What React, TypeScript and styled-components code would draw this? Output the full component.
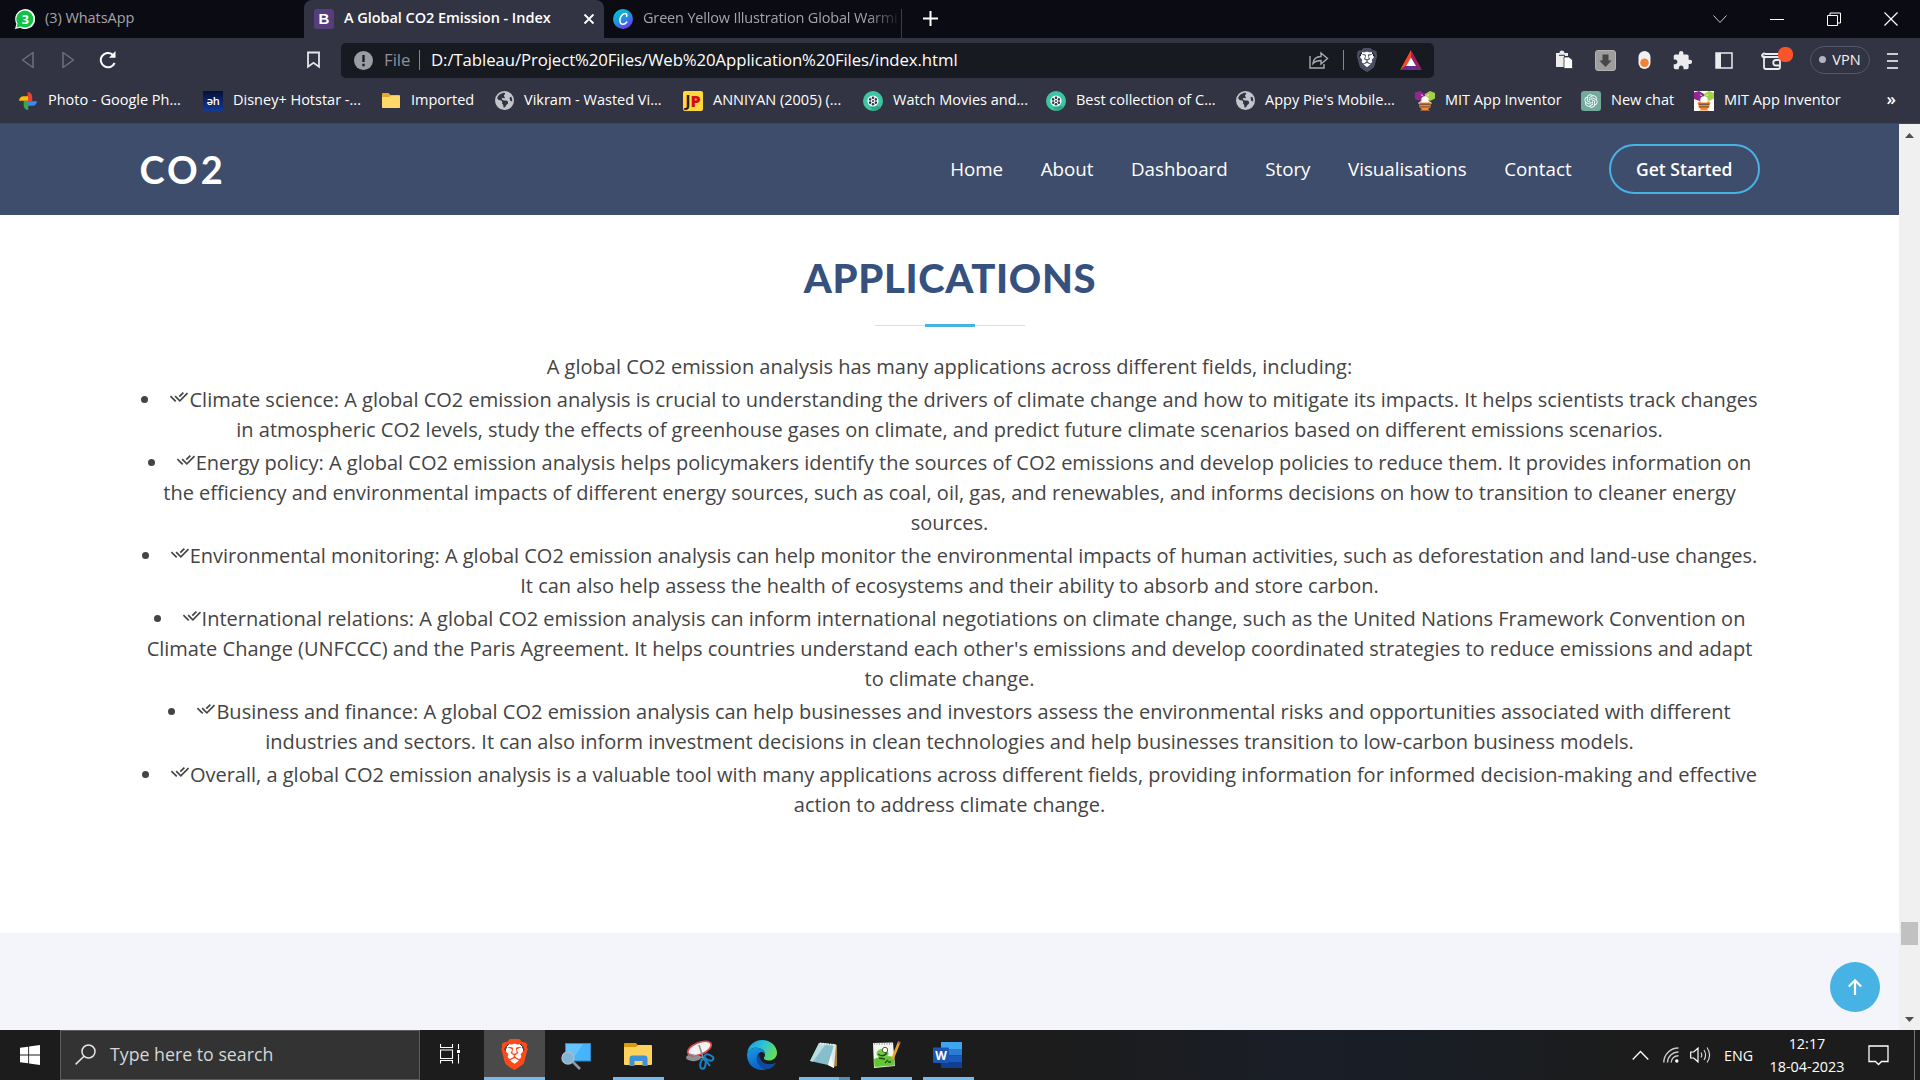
import React from "react";
import styled, { createGlobalStyle } from "styled-components";
import { RiCheckDoubleLine, RiOpenaiFill } from "react-icons/ri";
import { FaBrave, FaEarthAmericas } from "react-icons/fa6";
import { MdExtension } from "react-icons/md";

const Global = createGlobalStyle`
  * { box-sizing: border-box; }
  body { margin: 0; overflow: hidden; background: #fff; }
  svg { display: block; flex: none; }
`;

const Screen = styled.div`
  width: 1920px;
  height: 1080px;
  display: flex;
  flex-direction: column;
  overflow: hidden;
  font-family: "Open Sans", "Noto Sans", sans-serif;
`;

/* ---------- browser chrome ---------- */

const TabStrip = styled.div`
  height: 38px;
  display: flex;
  align-items: stretch;
  background: #0b0b14;
  flex: none;
`;

const Tab = styled.div<{ $width: number; $active?: boolean }>`
  width: ${(p) => p.$width}px;
  display: flex;
  align-items: center;
  gap: 10px;
  padding: 0 9px 0 10px;
  overflow: hidden;
  font-size: 14.5px;
  font-weight: ${(p) => (p.$active ? 600 : 400)};
  letter-spacing: -0.05px;
  color: ${(p) => (p.$active ? "#fff" : "#a3a4a9")};
  background: ${(p) => (p.$active ? "#323443" : "transparent")};
  border-radius: ${(p) => (p.$active ? "8px 8px 0 0" : "0")};
`;

const FirstTab = styled(Tab)`
  padding-left: 15px;
`;

const LastTab = styled(Tab)`
  padding: 0 0 0 9px;
  letter-spacing: -0.17px;
`;

const TabTitle = styled.span<{ $fade?: boolean }>`
  flex: 1;
  white-space: nowrap;
  line-height: 24px;
  padding-bottom: 2px;
  ${(p) => p.$fade && "mask-image: linear-gradient(90deg, #000 225px, transparent 258px);"}
`;

const TabDivider = styled.div`
  width: 1px;
  margin-top: 9px;
  background: #3b3c44;
`;

const NewTab = styled.div`
  display: flex;
  align-items: center;
  margin-left: 21px;
  padding-bottom: 1px;
`;

const WindowButtons = styled.div`
  margin-left: auto;
  display: flex;
  align-items: center;
  gap: 43px;
  padding: 0 22px 1px 0;
`;

const BootstrapMark = styled.span`
  width: 20px;
  height: 20px;
  border-radius: 3px;
  background: #563d7c;
  color: #fff;
  font: 700 15px/20px "Liberation Sans", sans-serif;
  text-align: center;
  flex: none;
`;

const Toolbar = styled.div`
  height: 45px;
  display: flex;
  align-items: center;
  background: #323443;
  flex: none;
`;

const NavButtons = styled.div`
  width: 341px;
  height: 45px;
  display: flex;
  align-items: center;
  padding: 0 0 1px 20px;
`;

const BackGap = styled.div`
  margin-left: 26px;
`;
const ReloadGap = styled.div`
  margin-left: 23px;
`;
const BookmarkGap = styled.div`
  margin-left: auto;
  margin-right: 20px;
`;

const AddressBar = styled.div`
  width: 1093px;
  height: 35px;
  display: flex;
  align-items: center;
  padding: 0 11px 1px 13px;
  border-radius: 5px;
  background: #171a21;
  color: #fff;
  font-size: 16.75px;
`;

const FileLabel = styled.span`
  width: 26px;
  margin-left: 11px;
  padding-bottom: 1px;
  color: #8d9098;
`;

const Rule = styled.span<{ $before?: number }>`
  width: 1px;
  height: 20px;
  margin: 0 11px 0 ${(p) => p.$before ?? 9}px;
  background: #85878d;
`;

const Address = styled.span`
  flex: 1;
  padding-bottom: 1px;
  white-space: nowrap;
  letter-spacing: -0.08px;
`;

const AddressActions = styled.div`
  display: flex;
  align-items: center;
`;

const Extensions = styled.div`
  flex: 1;
  display: flex;
  align-items: center;
  justify-content: space-between;
  padding: 0 190px 1px 121px;
`;

const RightTools = styled.div`
  display: flex;
  align-items: center;
  width: 160px;
  margin-left: -163px;
`;

const Wallet = styled.div`
  width: 33px;
  height: 30px;
  padding: 0;
  margin-top: -2px;
`;

const Vpn = styled.div`
  height: 28px;
  width: 60px;
  margin: -1px 0 0 17px;
  border: 1.5px solid #55576a;
  border-radius: 14px;
  display: flex;
  align-items: center;
  justify-content: center;
  gap: 6px;
  color: #f2f2f4;
  font-size: 14.5px;
  line-height: 20px;
  padding-bottom: 1px;
`;

const Dot = styled.span`
  width: 7px;
  height: 7px;
  border-radius: 50%;
  background: #b1b3c4;
`;

const MenuBars = styled.div`
  margin-left: 17px;
`;

const Bookmarks = styled.div`
  height: 41px;
  flex: none;
  display: grid;
  grid-template-columns: 185px 178px 114px 188px 180px 183px 190px 179px 166px 113px 190px 1fr;
  padding: 0 0 5px 18px;
  align-items: center;
  background: #323443;
  color: #fff;
  font-size: 14.5px;
  border-bottom: 1px solid #3b4762;
`;

const Bookmark = styled.div`
  display: flex;
  align-items: center;
  gap: 10px;
  white-space: nowrap;
`;

const BookmarkLabel = styled.span`
  padding-bottom: 2px;
`;

const HotstarMark = styled.span`
  width: 20px;
  height: 20px;
  background: linear-gradient(#060f3a, #143a94);
  color: #fff;
  font: 600 11px/20px "Open Sans", sans-serif;
  text-align: center;
  letter-spacing: -0.5px;
`;

const JpMark = styled.span`
  width: 20px;
  height: 20px;
  border-radius: 2px;
  background: #ffd83a;
  color: #22222a;
  font: 700 16px/20px "Open Sans", sans-serif;
  text-align: center;
  b { color: #d40d12; }
`;

const ChatMark = styled.span`
  width: 20px;
  height: 20px;
  border-radius: 3px;
  display: flex;
  align-items: center;
  justify-content: center;
  background: #74aa9c;
  color: #fff;
  font-size: 16px;
`;

const More = styled.span`
  justify-self: end;
  padding: 0 24px 4px 0;
  font-size: 17px;
  font-weight: 600;
  line-height: 20px;
`;

/* ---------- page ---------- */

const Viewport = styled.div`
  height: 906px;
  flex: none;
  display: flex;
`;

const Page = styled.main`
  width: 1899px;
  display: flex;
  flex-direction: column;
  position: relative;
  background: #fff;
`;

const Header = styled.header`
  height: 91px;
  flex: none;
  padding: 0 139.5px 2px;
  display: flex;
  align-items: center;
  justify-content: space-between;
  background: #3e4d6b;
`;

const Logo = styled.h1`
  margin: 0;
  color: #fff;
  font: 700 38px/46px Lato, sans-serif;
  letter-spacing: 3px;
`;

const Nav = styled.nav`
  display: flex;
  align-items: center;
  gap: 37.5px;
  color: #fff;
  font-size: 18.75px;
  font-weight: 500;
`;

const GetStarted = styled.a`
  height: 50px;
  padding: 0 25px;
  border: 2px solid #47b2e4;
  border-radius: 25px;
  font-size: 17.5px;
  font-weight: 600;
  line-height: 46px;
`;

const Section = styled.section`
  flex: 1;
  padding: 38px 139.5px 0;
  text-align: center;
  color: #444;
  font-size: 20px;
  line-height: 30px;
`;

const Title = styled.h2`
  margin: 0;
  padding-left: 1px;
  color: #37517e;
  font: 900 40px/50px Lato, sans-serif;
  letter-spacing: 0.65px;
`;

const Underline = styled.div`
  width: 150px;
  height: 3px;
  margin: 21px auto 24.5px;
  display: flex;
  align-items: center;
  background: linear-gradient(#ddd, #ddd) center / 100% 1px no-repeat;
  &::before {
    content: "";
    width: 50px;
    height: 3px;
    margin: 0 auto;
    background: #47b2e4;
  }
`;

const Intro = styled.p`
  margin: 0;
`;

const List = styled.ul`
  margin: 0;
  padding: 0;
  list-style-position: inside;
`;

const Item = styled.li`
  padding-top: 3px;
  svg {
    display: inline;
    vertical-align: 0;
  }
`;

const NextSection = styled.div`
  height: 97px;
  flex: none;
  background: #f3f5fa;
`;

const BackToTop = styled.button`
  position: absolute;
  right: 19px;
  bottom: 18px;
  width: 50px;
  height: 50px;
  padding: 0;
  border: 0;
  border-radius: 50%;
  display: flex;
  align-items: center;
  justify-content: center;
  background: #47b2e4;
`;

const Scrollbar = styled.div`
  width: 21px;
  display: flex;
  flex-direction: column;
  align-items: center;
  padding: 9px 0 8px;
  background: #f0f0f0;
`;

const Thumb = styled.div`
  width: 17px;
  height: 23px;
  margin-top: 784px;
  margin-bottom: auto;
  background: #c1c1c1;
`;

/* ---------- taskbar ---------- */

const Taskbar = styled.footer`
  height: 50px;
  flex: none;
  display: flex;
  background: linear-gradient(90deg, #1c1c1c 1050px, #1a1e27 1300px, #191e26 1400px, #1c1c1c 1620px);
  color: #fff;
`;

const Start = styled.div`
  width: 60px;
  display: flex;
  align-items: center;
  justify-content: center;
`;

const Search = styled.div`
  width: 360px;
  border: 1px solid #5c5c5c;
  background: #333;
  display: flex;
  align-items: center;
  padding: 0 0 2px 14px;
  gap: 14px;
  color: #d6d6d6;
  font-size: 17.75px;
`;

const TaskView = styled.div`
  width: 64px;
  display: flex;
  align-items: center;
  justify-content: center;
  padding: 0 4px 2px 0;
`;

const Task = styled.div<{ $active?: boolean; $open?: boolean; $multi?: boolean }>`
  width: 62px;
  height: 50px;
  padding: 0 2px 1px 0;
  display: flex;
  align-items: center;
  justify-content: center;
  background: ${(p) =>
    p.$active
      ? "linear-gradient(#76b9ed, #76b9ed) 0 100% / 61px 3px no-repeat, linear-gradient(#4a4a4a, #4a4a4a) 0 0 / 61px 50px no-repeat"
      : p.$multi
        ? "linear-gradient(90deg, #76b9ed 40px, #5a8bb2 40px) 5px 100% / 51px 3px no-repeat"
        : p.$open
          ? "linear-gradient(#76b9ed, #76b9ed) 5px 100% / 51px 3px no-repeat"
          : "none"};
`;

const Tray = styled.div`
  margin-left: auto;
  display: flex;
  align-items: center;
`;

const TrayIcon = styled.div<{ $gap: number }>`
  margin-right: ${(p) => p.$gap}px;
`;

const Lang = styled.span`
  width: 29px;
  font-size: 14.25px;
  white-space: nowrap;
`;

const Clock = styled.div`
  width: 76px;
  margin: 0 23px 1px 16px;
  text-align: center;
  font-size: 14.4px;
  line-height: 23px;
  white-space: nowrap;
`;

const DesktopEdge = styled.div`
  width: 6px;
  height: 50px;
  margin-left: 25px;
  border-left: 1px solid #767676;
`;

const BraveBox = styled.div<{ $size: number; $shield: string }>`
  width: ${(p) => p.$size}px;
  height: ${(p) => p.$size}px;
  color: ${(p) => p.$shield};
  display: flex;
  align-items: center;
  justify-content: center;
  background: radial-gradient(ellipse 29% 40% at 50% 48%, #fff 98%, transparent 100%);
  svg {
    width: 100%;
    height: 100%;
  }
`;

/* ---------- drawings ---------- */

const WhatsApp = () => (
  <svg width="20" height="20" viewBox="0 0 20 20">
    <path d="M0 20l1.400-5.200A10 10 0 1 1 5.200 18.700z" fill="#fff" />
    <path d="M1.500 18.600l1.100-4A8.500 8.500 0 1 1 5.600 17.500z" fill="#12c244" />
    <text x="10.300" y="14.600" fontSize="12.500" fontWeight="700" fill="#fff" textAnchor="middle" fontFamily="Open Sans">3</text>
  </svg>
);

const Canva = () => (
  <svg width="20" height="20" viewBox="0 0 20 20">
    <defs>
      <linearGradient id="canva" x1="0.2" y1="0" x2="0.8" y2="1">
        <stop offset="0" stopColor="#06c3cf" />
        <stop offset="0.5" stopColor="#1f93e0" />
        <stop offset="1" stopColor="#7a2ae8" />
      </linearGradient>
    </defs>
    <circle cx="10" cy="10" r="10" fill="url(#canva)" />
    <path d="M13.600 7.400c.5-1.500.2-2.900-1.500-2.900-2.900 0-5.200 3.600-5.200 6.800 0 2.400 1.200 4 3.100 4 1.500 0 2.800-.8 3.800-2.300" fill="none" stroke="#fff" strokeWidth="1.500" strokeLinecap="round" />
  </svg>
);

const Photos = () => (
  <svg width="20" height="20" viewBox="0 0 20 20">
    <path d="M9.600 1a4.600 4.600 0 0 1 4.600 4.700V10H9.600z" fill="#ea4335" />
    <path d="M19 10.200a4.600 4.600 0 0 1-4.600 4.500H10v-4.500z" fill="#4285f4" />
    <path d="M10.300 19a4.600 4.600 0 0 1-4.600-4.600V10h4.600z" fill="#34a853" />
    <path d="M1 9.800a4.600 4.600 0 0 1 4.600-4.500H10v4.500z" fill="#fbbc04" />
  </svg>
);

const Folder = () => (
  <svg width="20" height="20" viewBox="0 0 20 20">
    <path d="M1 3q0-1 1-1h5.500l2 2H18q1 0 1 1v11q0 1-1 1H2q-1 0-1-1z" fill="#e3a92c" />
    <path d="M1 6h7l2-1.500H18q1 0 1 1V16q0 1-1 1H2q-1 0-1-1z" fill="#ffd869" />
  </svg>
);

const Reel = () => (
  <svg width="20" height="20" viewBox="0 0 20 20">
    <circle cx="10" cy="10" r="10" fill="#3cc7a2" />
    <path d="M13.500 14.500L18 16a10 10 0 0 1-8 4l-3-4z" fill="#2fa888" />
    <circle cx="10" cy="10" r="5.600" fill="#f4f7f6" />
    {[0, 60, 120, 180, 240, 300].map((a) => (
      <circle key={a} cx="10" cy="6.700" r="1.250" fill="#27384a" transform={`rotate(${a} 10 10)`} />
    ))}
    <circle cx="10" cy="10" r="1" fill="#27384a" />
  </svg>
);

const Bee = ({ boxed }: { boxed?: boolean }) => (
  <svg width="20" height="20" viewBox="0 0 20 20">
    {boxed && <path d="M0 0h20v20H0z" fill="#fff" />}
    <path d="M0 1.500L5 0l5 3v4.500L5.500 10 0 8z" fill="#91278f" />
    <path d="M10 3l5-3 5 2v5.500L15 10l-5-2.500z" fill="#a5cf47" />
    <path d="M3 12l3-2h8l3 2-2 2H5z" fill={boxed ? "#f7a15a" : "#f3d9c4"} />
    <circle cx="10" cy="9" r="3.700" fill="#fff" />
    <path d="M7.500 5L6.300 3.500M12.500 5l1.200-1.500" stroke="#fff" />
    <path d="M4.500 11.500h11v5L13 18l2 1.500H5L7 18l-2.500-1.500z" fill="#f58a33" />
    <path d="M4.500 12.500h11v1.500h-11zM5 15.200h10v1.300H5z" fill="#7f5636" />
  </svg>
);

const Edge = () => (
  <svg width="30" height="30" viewBox="0 0 30 30">
    <defs>
      <linearGradient id="edgeTop" x1="0" y1="0.2" x2="1" y2="0.6">
        <stop offset="0" stopColor="#1c9fe0" />
        <stop offset="0.5" stopColor="#2fc3d6" />
        <stop offset="1" stopColor="#69e04d" />
      </linearGradient>
      <linearGradient id="edgeLeft" x1="0" y1="0" x2="0.4" y2="1">
        <stop offset="0" stopColor="#1a9be6" />
        <stop offset="1" stopColor="#0a62c4" />
      </linearGradient>
    </defs>
    <path d="M.2 13C1.200 5.500 7.300 0 15 0c8.500 0 15 6 15 12.800 0 4.700-3.700 7.800-8 7.800-3.500 0-5.200-1.300-5.200-2.300 0-.8 1.200-1.300 1.200-3.600C18 10.500 14 7.800 9.500 7.800 4.500 7.800 1.300 10.500.2 13z" fill="url(#edgeTop)" />
    <path d="M0 15c0-4 4-7.200 9.500-7.200 4.500 0 8.500 2.700 8.500 6.700-1-2.200-3-3-4.700-2.200C9.500 14.200 9 19.500 12 24c1.500 2.500 4 4.500 7 5.400C9 32 0 25 0 15z" fill="url(#edgeLeft)" />
    <path d="M11.800 13.500C8.500 17 9 22.500 13.500 26.500c3.500 3 8 3.500 11.500 1 1.500-1 2.700-2.500 3.600-4 .2-.5-.2-.8-.7-.6-8 3.500-15.500-.8-16.100-9.400z" fill="#114a9c" />
  </svg>
);

const bookmarks: [React.ReactNode, string][] = [
  [<Photos />, "Photo - Google Ph..."],
  [<HotstarMark>əh</HotstarMark>, "Disney+ Hotstar -..."],
  [<Folder />, "Imported"],
  [<FaEarthAmericas size={19} color="#c3c5ca" />, "Vikram - Wasted Vi..."],
  [<JpMark>J<b>P</b></JpMark>, "ANNIYAN (2005) (..."],
  [<Reel />, "Watch Movies and..."],
  [<Reel />, "Best collection of C..."],
  [<FaEarthAmericas size={19} color="#c3c5ca" />, "Appy Pie's Mobile..."],
  [<Bee />, "MIT App Inventor"],
  [<ChatMark><RiOpenaiFill /></ChatMark>, "New chat"],
  [<Bee boxed />, "MIT App Inventor"],
];

const applications = [
  "Climate science: A global CO2 emission analysis is crucial to understanding the drivers of climate change and how to mitigate its impacts. It helps scientists track changes in atmospheric CO2 levels, study the effects of greenhouse gases on climate, and predict future climate scenarios based on different emissions scenarios.",
  "Energy policy: A global CO2 emission analysis helps policymakers identify the sources of CO2 emissions and develop policies to reduce them. It provides information on the efficiency and environmental impacts of different energy sources, such as coal, oil, gas, and renewables, and informs decisions on how to transition to cleaner energy sources.",
  "Environmental monitoring: A global CO2 emission analysis can help monitor the environmental impacts of human activities, such as deforestation and land-use changes. It can also help assess the health of ecosystems and their ability to absorb and store carbon.",
  "International relations: A global CO2 emission analysis can inform international negotiations on climate change, such as the United Nations Framework Convention on Climate Change (UNFCCC) and the Paris Agreement. It helps countries understand each other's emissions and develop coordinated strategies to reduce emissions and adapt to climate change.",
  "Business and finance: A global CO2 emission analysis can help businesses and investors assess the environmental risks and opportunities associated with different industries and sectors. It can also inform investment decisions in clean technologies and help businesses transition to low-carbon business models.",
  "Overall, a global CO2 emission analysis is a valuable tool with many applications across different fields, providing information for informed decision-making and effective action to address climate change.",
];

const Tabs = () => (
  <TabStrip>
    <FirstTab $width={304}>
      <WhatsApp />
      <TabTitle>(3) WhatsApp</TabTitle>
    </FirstTab>
    <Tab $width={300} $active>
      <BootstrapMark>B</BootstrapMark>
      <TabTitle>A Global CO2 Emission - Index</TabTitle>
      <svg width="12" height="12" viewBox="0 0 12 12"><path d="M1.500 1.500l9 9M10.500 1.500l-9 9" stroke="#fff" strokeWidth="1.800" /></svg>
    </Tab>
    <LastTab $width={297}>
      <Canva />
      <TabTitle $fade>Green Yellow Illustration Global Warmi</TabTitle>
    </LastTab>
    <TabDivider />
    <NewTab>
      <svg width="15" height="15" viewBox="0 0 15 15"><path d="M7.500 0v15M0 7.500h15" stroke="#fff" strokeWidth="2" /></svg>
    </NewTab>
    <WindowButtons>
      <svg width="14" height="14" viewBox="0 0 14 14"><path d="M.5 3.500L7 10.500l6.500-7" fill="none" stroke="#c9c9cc" /></svg>
      <svg width="14" height="14" viewBox="0 0 14 14"><path d="M0 7.500h14" stroke="#fff" /></svg>
      <svg width="14" height="14" viewBox="0 0 14 14"><path d="M.5 3.500h10v10H.5zM3 3.500V1h10.500v10H11" fill="none" stroke="#fff" /></svg>
      <svg width="14" height="14" viewBox="0 0 14 14"><path d="M.5.500l13 13M13.500.500l-13 13" stroke="#fff" strokeWidth="1.200" /></svg>
    </WindowButtons>
  </TabStrip>
);

const Tools = () => (
  <Toolbar>
    <NavButtons>
      <svg width="15" height="18" viewBox="0 0 15 18"><path d="M13 1.500v15L2.500 9z" fill="none" stroke="#6d6f7b" strokeWidth="1.500" strokeLinejoin="round" /></svg>
      <BackGap>
        <svg width="15" height="18" viewBox="0 0 15 18"><path d="M2 1.500v15L12.500 9z" fill="none" stroke="#6d6f7b" strokeWidth="1.500" strokeLinejoin="round" /></svg>
      </BackGap>
      <ReloadGap>
        <svg width="18" height="18" viewBox="0 0 18 18"><path d="M15.600 12A7.200 7.200 0 1 1 13.500 3.500" fill="none" stroke="#fff" strokeWidth="2" /><path d="M16.500 0v6.800H10z" fill="#fff" /></svg>
      </ReloadGap>
      <BookmarkGap>
        <svg width="15" height="18" viewBox="0 0 15 18"><path d="M2 1.500h11v14.300l-5.500-4-5.500 4z" fill="none" stroke="#e6e6ea" strokeWidth="1.800" /></svg>
      </BookmarkGap>
    </NavButtons>
    <AddressBar>
      <svg width="19" height="19" viewBox="0 0 19 19"><circle cx="9.500" cy="9.500" r="9.500" fill="#9b9da5" /><path d="M9.500 4v7M9.500 12.700v2.500" stroke="#171a21" strokeWidth="2.300" /></svg>
      <FileLabel>File</FileLabel>
      <Rule />
      <Address>D:/Tableau/Project%20Files/Web%20Application%20Files/index.html</Address>
      <AddressActions>
        <svg width="20" height="18" viewBox="0 0 20 18"><path d="M1 5v12h14v-4M4 12.500c.5-4.500 3.500-7 8-7V2l6.500 5.500-6.500 5.500V9.500c-3.500 0-6 1-8 3z" fill="none" stroke="#a9abb0" strokeWidth="1.400" /></svg>
        <Rule $before={14} />
        <BraveBox $size={24} $shield="#4c4e63"><FaBrave /></BraveBox>
        <svg width="44" height="20" viewBox="0 0 44 20"><path d="M32 0v7.500L27 16l-6 4z" fill="#ff4724" /><path d="M32 0l11 20-6-4-5-8.500z" fill="#9e1f63" /><path d="M21 20l6-4h10l6 4z" fill="#662d91" /><path d="M32 7.500l5 8.500H27z" fill="#fff" /></svg>
      </AddressActions>
    </AddressBar>
    <Extensions>
      <svg width="18" height="20" viewBox="0 0 18 20"><path d="M1 3h3.500a2.500 2.500 0 0 1 5 0H13v3H9v11H1z" fill="#ececec" /><path d="M4 5.300h6" stroke="#323443" strokeWidth="1" /><path d="M9 7h5l3.500 3v8.500H9z" fill="#fff" stroke="#323443" strokeWidth=".8" /></svg>
      <svg width="21" height="21" viewBox="0 0 21 21"><rect x=".5" y=".5" width="20" height="20" rx="2.500" fill="#9d9d9d" stroke="#b3b3b3" /><path d="M7.500 4.500h6v6h3.200l-6.200 6.500-6.200-6.500h3.200z" fill="#474747" /></svg>
      <svg width="13" height="20" viewBox="0 0 13 20"><rect x=".5" y="1" width="12" height="18" rx="6" fill="#f1f1f1" /><circle cx="6.500" cy="12.800" r="4.300" fill="#f58233" /></svg>
      <MdExtension size={21} color="#ececee" />
      <svg width="18" height="17" viewBox="0 0 18 17"><path d="M1 1h16v15H1z" fill="none" stroke="#ececee" strokeWidth="1.500" /><path d="M1 1h5v15H1z" fill="#ececee" /></svg>
    </Extensions>
    <RightTools>
      <Wallet>
        <svg width="33" height="30" viewBox="0 0 33 30"><path d="M18 9H5.500a2 2 0 1 0 0 3H18q2 0 2 2v8q0 2-2 2H6q-2 0-2-2V10.500M20 15h-4a2.700 2.700 0 0 0 0 5.500h4" fill="none" stroke="#ececee" strokeWidth="1.800" /><rect x="18" y="2" width="15" height="15" rx="6.500" fill="#fb542b" /></svg>
      </Wallet>
      <Vpn><Dot />VPN</Vpn>
      <MenuBars>
        <svg width="11" height="16" viewBox="0 0 11 16"><path d="M0 1h11M0 8h11M0 15h11" stroke="#fff" strokeWidth="1.600" /></svg>
      </MenuBars>
    </RightTools>
  </Toolbar>
);

const UpArrow = () => <svg width="9" height="5" viewBox="0 0 9 5"><path d="M0 5L4.500 0 9 5z" fill="#505050" /></svg>;
const DownArrow = () => <svg width="9" height="5" viewBox="0 0 9 5"><path d="M0 0h9L4.500 5z" fill="#505050" /></svg>;

export default function App() {
  return (
    <Screen>
      <Global />
      <Tabs />
      <Tools />
      <Bookmarks>
        {bookmarks.map(([icon, label], i) => (
          <Bookmark key={i}>{icon}<BookmarkLabel>{label}</BookmarkLabel></Bookmark>
        ))}
        <More>»</More>
      </Bookmarks>
      <Viewport>
        <Page>
          <Header>
            <Logo>CO2</Logo>
            <Nav>
              <a>Home</a>
              <a>About</a>
              <a>Dashboard</a>
              <a>Story</a>
              <a>Visualisations</a>
              <a>Contact</a>
              <GetStarted>Get Started</GetStarted>
            </Nav>
          </Header>
          <Section>
            <Title>APPLICATIONS</Title>
            <Underline />
            <Intro>A global CO2 emission analysis has many applications across different fields, including:</Intro>
            <List>
              {applications.map((text) => (
                <Item key={text}><RiCheckDoubleLine size={20} />{text}</Item>
              ))}
            </List>
          </Section>
          <NextSection />
          <BackToTop>
            <svg width="16" height="18" viewBox="0 0 16 18"><path d="M8 17V2.500M1.800 8.500L8 2.300l6.200 6.200" fill="none" stroke="#fff" strokeWidth="2.200" /></svg>
          </BackToTop>
        </Page>
        <Scrollbar>
          <UpArrow />
          <Thumb />
          <DownArrow />
        </Scrollbar>
      </Viewport>
      <Taskbar>
        <Start>
          <svg width="20" height="20" viewBox="0 0 20 20"><path d="M0 2.800l8.200-1.100v7.800H0zM9.100 1.500L20 0v9.500H9.100zM0 10.500h8.200v7.800L0 17.200zM9.100 10.500H20V20L9.100 18.500z" fill="#fff" /></svg>
        </Start>
        <Search>
          <svg width="21" height="21" viewBox="0 0 21 21"><circle cx="13.500" cy="7.500" r="6.500" fill="none" stroke="#e6e6e6" strokeWidth="1.500" /><path d="M9 12.200L.6 20.400" stroke="#e6e6e6" strokeWidth="1.500" /></svg>
          Type here to search
        </Search>
        <TaskView>
          <svg width="20" height="20" viewBox="0 0 20 20"><path d="M.5 0v3.500h12V0M.5 6h12v8.500H.5zM.5 19.500V16.500h12v3M18.500 0v5M18.500 10v9.500" fill="none" stroke="#fff" strokeWidth="1.100" /><path d="M17 6h3v3h-3z" fill="#fff" /></svg>
        </TaskView>
        <Task $active><BraveBox $size={31} $shield="#fb4a1c"><FaBrave /></BraveBox></Task>
        <Task>
          <svg width="32" height="30" viewBox="0 0 32 30"><path d="M5 3h26v18.500H5z" fill="#2f87c4" /><path d="M6 4h24v16.500H6z" fill="#45b4fb" /><path d="M6 4h17L12 20.500H6z" fill="#66c3fd" /><path d="M13 22l7 7" stroke="#8c98a3" strokeWidth="2.600" /><circle cx="8" cy="18" r="6" fill="#86b4d6" stroke="#a9bccb" strokeWidth="1.400" /></svg>
        </Task>
        <Task $open>
          <svg width="30" height="28" viewBox="0 0 30 28"><path d="M1 3q0-1 1-1h11l2 2.500V8H1z" fill="#dd9a08" /><path d="M1 6h12l2-2h13q1 0 1 1v18q0 1-1 1H2q-1 0-1-1z" fill="#ffd25e" /><path d="M6.500 25v-7.500q0-3 3-3h12q3 0 3 3V25h-5v-5h-8v5z" fill="#3d92d9" /></svg>
        </Task>
        <Task>
          <svg width="30" height="30" viewBox="0 0 30 30"><ellipse cx="8.500" cy="17.500" rx="7.500" ry="3.700" fill="#8d9092" /><ellipse cx="14.500" cy="8.500" rx="12.500" ry="6" fill="#f3f3f3" stroke="#d8434a" strokeWidth="1.600" transform="rotate(-22 14.500 8.500)" /><path d="M14 5l4.500 14M4 14l15 4" stroke="#8b9296" strokeWidth="1.600" /><g fill="none" stroke="#1b82c5" strokeWidth="2"><ellipse cx="24" cy="17.500" rx="4.600" ry="2.600" transform="rotate(25 24 17.500)" /><ellipse cx="18" cy="24" rx="2.600" ry="4.800" transform="rotate(10 18 24)" /><path d="M19 18l6 8" /></g></svg>
        </Task>
        <Task><Edge /></Task>
        <Task $multi>
          <svg width="28" height="28" viewBox="0 0 28 28"><path d="M24 3l3 1v21l-4 1z" fill="#a8813d" /><path d="M9 2l17 1.500L24 27l-6-3z" fill="#dce8ea" /><path d="M9 2l15 1.500L18 24 0 20z" fill="#86bfcb" /><path d="M9 2l7 .7L3 20.500 0 20z" fill="#b9dde3" /><path d="M18 24l3-10 3 13z" fill="#f7f9f9" /><path d="M10 2.500l15 1.500" stroke="#efefef" strokeWidth="1.800" strokeDasharray="1.500 1" /></svg>
        </Task>
        <Task $open>
          <svg width="30" height="28" viewBox="0 0 30 28"><path d="M2 2l20-.5L24 25 3 27z" fill="#f5f5f0" /><path d="M3 18q9-5 20-2l.5 8.500L3.500 26z" fill="#62c832" /><ellipse cx="11.500" cy="12.500" rx="6" ry="4.500" fill="#72cf3c" /><circle cx="14" cy="9" r="2.700" fill="#fff" stroke="#3c6b2f" /><path d="M7 13q5 4 9-1M14 22l3-3M8 17l6 1M17 21h3" fill="none" stroke="#24491c" strokeWidth="1.300" /><path d="M3 3h18" stroke="#9a9a9a" strokeWidth="1.600" strokeDasharray="1 1.500" /><path d="M28 1.500L21.500 18" stroke="#e9a52c" strokeWidth="2.600" /><path d="M28.500.500l-.8 2.300" stroke="#c05b58" strokeWidth="2.600" /></svg>
        </Task>
        <Task $open>
          <svg width="30" height="28" viewBox="0 0 30 28"><path d="M8 1h21v7H8z" fill="#41a5ee" /><path d="M8 8h21v6.500H8z" fill="#2b7cd3" /><path d="M8 14.500h21V21H8z" fill="#185abd" /><path d="M8 21h21v6H8z" fill="#103f91" /><rect x="0" y="6.500" width="16" height="15.500" rx="1" fill="#1b56b5" /><text x="8" y="18.800" fontSize="12" fontWeight="700" fill="#fff" textAnchor="middle" fontFamily="Open Sans">W</text></svg>
        </Task>
        <Tray>
          <TrayIcon $gap={14}>
            <svg width="17" height="11" viewBox="0 0 17 11"><path d="M.7 9.500L8.500 1.500l7.800 8" fill="none" stroke="#fff" strokeWidth="1.300" /></svg>
          </TrayIcon>
          <TrayIcon $gap={11}>
            <svg width="16" height="16" viewBox="0 0 16 16"><circle cx="13.800" cy="14" r="1.700" fill="#fff" /><path d="M.8 15.500A14.500 14.500 0 0 1 15.500 1M4.500 15.500A10.500 10.500 0 0 1 15.500 5M8.200 15.500A7 7 0 0 1 15.500 8.700" fill="none" stroke="#c9c9c9" strokeWidth="1.400" /></svg>
          </TrayIcon>
          <TrayIcon $gap={13}>
            <svg width="21" height="18" viewBox="0 0 21 18"><path d="M.7 6h3L8 2.200v13.600L3.700 12h-3z" fill="none" stroke="#fff" strokeWidth="1.200" /><path d="M11 6.500q1.500 2.500 0 5M14 4q3.200 5 0 10M17 1.500q5.200 7.500 0 15" fill="none" stroke="#d4d4d4" strokeWidth="1.200" /></svg>
          </TrayIcon>
          <Lang>ENG</Lang>
          <Clock>12:17<br />18-04-2023</Clock>
          <svg width="21" height="21" viewBox="0 0 21 21"><path d="M1 1h19v15.500h-6.500l-3 3-3-3H1z" fill="none" stroke="#fff" strokeWidth="1.300" /></svg>
          <DesktopEdge />
        </Tray>
      </Taskbar>
    </Screen>
  );
}
